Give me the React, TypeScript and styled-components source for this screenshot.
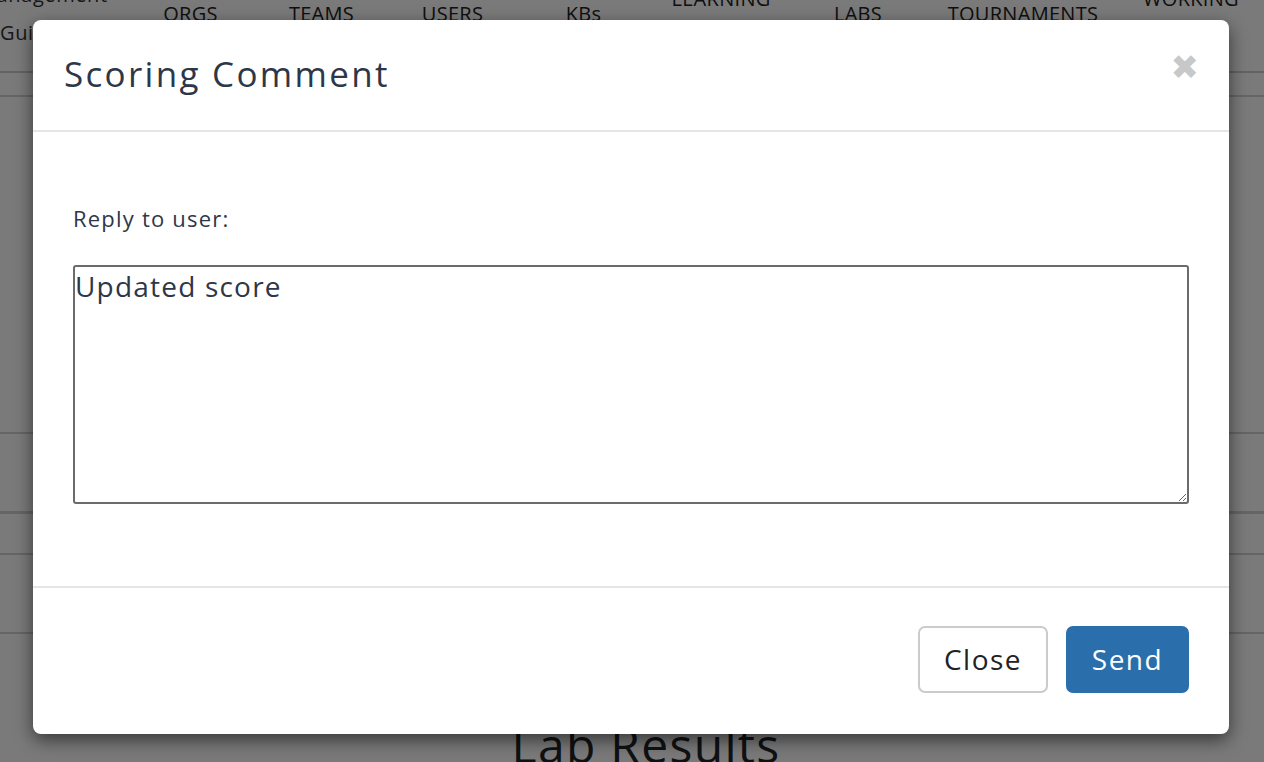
import React from "react";
import styled, { createGlobalStyle } from "styled-components";

const Global = createGlobalStyle`
  html, body { margin: 0; padding: 0; }
  body {
    width: 1264px; height: 762px; overflow: hidden;
    background: #fff;
    font-family: "Open Sans", "Liberation Sans", sans-serif;
    color: #212529;
  }
  * { box-sizing: border-box; }
`;

const Page = styled.div`
  position: relative;
  width: 1264px;
  height: 762px;
  overflow: hidden;
  background: #fff;
`;

const NavBar = styled.nav`
  height: 73px;
  border-bottom: 2px solid #d0d0d0;
  overflow: hidden;
`;

const NavRow = styled.div`
  display: grid;
  grid-template-columns: 125px 131px 131px 131px 131px 144px 130px 200px 136px;
  align-items: center;
  height: 60px;
  margin-top: -16px;
`;

const Brand = styled.div`
  font-size: 20px;
  line-height: 38px;
  color: #333;
  white-space: nowrap;
  overflow: hidden;
  text-indent: -22px;
  letter-spacing: 0.6px;
`;

const NavItem = styled.div<{ $raised?: boolean }>`
  text-align: center;
  font-size: 20px;
  line-height: 30px;
  color: #222;
  white-space: nowrap;
  letter-spacing: 0.3px;
  padding-bottom: ${(p) => (p.$raised ? 30 : 0)}px;
`;

const SubBar = styled.div<{ $h: number; $thick?: boolean }>`
  height: ${(p) => p.$h}px;
  border-bottom: ${(p) => (p.$thick ? 3 : 2)}px solid #d4d4d4;
`;

const Heading = styled.h1`
  margin: 0;
  text-align: center;
  font-size: 48px;
  font-weight: 400;
  letter-spacing: 1.3px;
  color: #212529;
  padding: 78px 0 0 28px;
`;

const Backdrop = styled.div`
  position: absolute;
  inset: 0;
  background: rgba(0, 0, 0, 0.52);
`;

const Modal = styled.div`
  position: absolute;
  left: 33px;
  top: 20px;
  width: 1196px;
  height: 714px;
  background: #fff;
  border-radius: 8px;
  box-shadow: 0 6px 18px rgba(0, 0, 0, 0.55);
  display: flex;
  flex-direction: column;
`;

const Header = styled.div`
  height: 112px;
  border-bottom: 2px solid #e5e5e5;
  display: flex;
  align-items: flex-start;
  justify-content: space-between;
  padding: 0 30px 0 31px;
`;

const Title = styled.h4`
  margin: 0;
  margin-top: 32px;
  font-size: 35px;
  font-weight: 400;
  line-height: 44px;
  letter-spacing: 2.3px;
  color: #2d3748;
`;

const CloseX = styled.button`
  border: 0;
  background: none;
  padding: 0;
  margin-top: 30px;
  color: #c8c8c8;
  font-size: 34px;
  font-weight: 700;
  line-height: 1;
  cursor: pointer;
  font-family: "DejaVu Sans", sans-serif;
`;

const Body = styled.div`
  flex: 1;
  padding: 72px 40px 0 40px;
`;

const Label = styled.label`
  display: block;
  font-size: 22px;
  line-height: 28px;
  letter-spacing: 1.2px;
  color: #2d3748;
  margin-bottom: 33px;
`;

const TextArea = styled.textarea`
  display: block;
  width: 1116px;
  height: 239px;
  border: 2px solid #6b6b6b;
  border-radius: 3px;
  padding: 1px 0 0 0;
  font-family: "Open Sans", "Liberation Sans", sans-serif;
  font-size: 28px;
  line-height: 36px;
  letter-spacing: 1.2px;
  color: #2d3748;
  resize: vertical;
  outline: none;
`;

const Footer = styled.div`
  height: 148px;
  border-top: 2px solid #e5e5e5;
  display: flex;
  justify-content: flex-end;
  align-items: flex-start;
  gap: 18px;
  padding: 38px 40px 0 0;
`;

const Button = styled.button<{ $primary?: boolean }>`
  height: 67px;
  padding: 0 20px 2px;
  border-radius: 7px;
  font-family: "Open Sans", "Liberation Sans", sans-serif;
  font-size: 28px;
  letter-spacing: 1.5px;
  cursor: pointer;
  border: 2px solid ${(p) => (p.$primary ? "#2a6eab" : "#cbcbcb")};
  background: ${(p) => (p.$primary ? "#2a6eab" : "#fff")};
  color: ${(p) => (p.$primary ? "#fff" : "#222")};
  min-width: ${(p) => (p.$primary ? 123 : 130)}px;
`;

export default function App() {
  return (
    <>
      <Global />
      <Page>
        <NavBar>
          <NavRow>
            <Brand>
              Management
              <br />
              Guide
            </Brand>
            <NavItem>ORGS</NavItem>
            <NavItem>TEAMS</NavItem>
            <NavItem>USERS</NavItem>
            <NavItem>KBs</NavItem>
            <NavItem $raised>LEARNING</NavItem>
            <NavItem>LABS</NavItem>
            <NavItem>TOURNAMENTS</NavItem>
            <NavItem $raised>WORKING</NavItem>
          </NavRow>
        </NavBar>
        <SubBar $h={24} />
        <SubBar $h={337} />
        <SubBar $h={80} $thick />
        <SubBar $h={41} />
        <SubBar $h={79} />
        <Heading>Lab Results</Heading>
        <Backdrop />
        <Modal role="dialog">
          <Header>
            <Title>Scoring Comment</Title>
            <CloseX aria-label="Close">✖</CloseX>
          </Header>
          <Body>
            <Label>Reply to user:</Label>
            <TextArea defaultValue="Updated score" />
          </Body>
          <Footer>
            <Button>Close</Button>
            <Button $primary>Send</Button>
          </Footer>
        </Modal>
      </Page>
    </>
  );
}
